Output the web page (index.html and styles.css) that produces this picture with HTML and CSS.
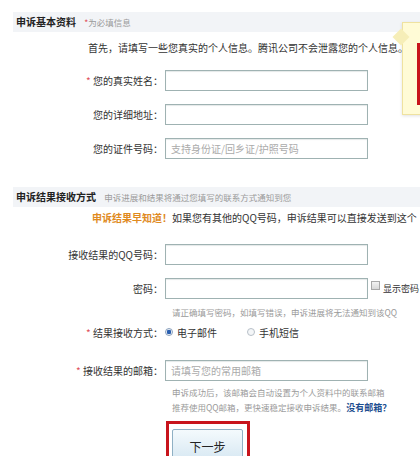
FILE: index.html
```html
<!DOCTYPE html>
<html lang="zh-CN">
<head>
    <meta charset="UTF-8">
    <title>申诉</title>
    <link rel="stylesheet" href="styles.css">
</head>
<body>
    <div class="page">

        <!-- 基本资料 -->
        <div class="bar">申诉基本资料 <span class="bar-note"><em>*</em>为必填信息</span></div>
        <p class="intro">首先，请填写一些您真实的个人信息。腾讯公司不会泄露您的个人信息。</p>

        <div class="row first">
            <label class="label"><em>*</em> 您的真实姓名：</label>
            <input class="field" type="text">
        </div>
        <div class="row">
            <label class="label">您的详细地址：</label>
            <input class="field" type="text">
        </div>
        <div class="row">
            <label class="label">您的证件号码：</label>
            <input class="field" type="text" placeholder="支持身份证/回乡证/护照号码">
        </div>

        <!-- 接收方式 -->
        <div class="bar second">申诉结果接收方式 <span class="bar-note">申诉进展和结果将通过您填写的联系方式通知到您</span></div>
        <p class="tip"><strong>申诉结果早知道！</strong>如果您有其他的QQ号码，申诉结果可以直接发送到这个</p>

        <div class="row qq">
            <label class="label">接收结果的QQ号码：</label>
            <input class="field" type="text">
        </div>
        <div class="row">
            <label class="label">密码：</label>
            <input class="field" type="password">
            <span class="check"><i class="box"></i>显示密码</span>
        </div>
        <p class="hint">请正确填写密码，如填写错误，申诉进展将无法通知到该QQ</p>

        <div class="row radios">
            <label class="label"><em>*</em> 结果接收方式：</label>
            <span class="radio on"><i></i>电子邮件</span>
            <span class="radio"><i></i>手机短信</span>
        </div>

        <div class="row mail">
            <label class="label"><em>*</em> 接收结果的邮箱：</label>
            <input class="field" type="text" placeholder="请填写您的常用邮箱">
        </div>
        <p class="hint two">申诉成功后，该邮箱会自动设置为个人资料中的联系邮箱<br>推荐使用QQ邮箱，更快速稳定接收申诉结果。<a href="#">没有邮箱？</a></p>

        <div class="actions">
            <span class="mark"><button class="next">下一步</button></span>
        </div>

        <!-- 提示框 -->
        <div class="pop"><span class="pop-box"></span></div>
    </div>
</body>
</html>
```

FILE: styles.css
```css
* {
    margin: 0;
    padding: 0;
    box-sizing: border-box;
}

body {
    width: 420px;
    height: 456px;
    overflow: hidden;
    background: #fff;
    font-family: "Noto Sans CJK SC", "DejaVu Sans", sans-serif;
    font-size: 10px;
    color: #333;
}

.page {
    position: relative;
    padding-left: 13px;
    padding-top: 12px;
}

em {
    font-style: normal;
    color: #e0505a;
}

/* 标题条 */
.bar {
    height: 20px;
    line-height: 20px;
    padding-left: 3px;
    background: #f2f4f7;
    font-weight: bold;
    font-size: 10px;
    color: #222;
    white-space: nowrap;
}

.bar-note {
    margin-left: 6px;
    font-weight: normal;
    font-size: 8.5px;
    color: #9a9a9a;
}

.bar.second {
    margin-top: 28px;
}

.intro {
    margin-top: 8px;
    padding-left: 75px;
    line-height: 16px;
    white-space: nowrap;
}

.tip {
    margin-top: 3px;
    padding-left: 79px;
    line-height: 16px;
    white-space: nowrap;
}

.tip strong {
    color: #e08a1e;
}

/* 表单行 */
.row {
    display: flex;
    align-items: center;
    height: 21px;
    margin-top: 13px;
}

.row.first {
    margin-top: 14px;
}

.row.qq {
    margin-top: 18px;
}

.label {
    width: 152px;
    padding-right: 2px;
    text-align: right;
    white-space: nowrap;
}

.field {
    width: 203px;
    height: 21px;
    padding-left: 5px;
    border: 1px solid #9fb2b2;
    box-shadow: inset 0 1px 1px #e4e8e8;
    font-family: inherit;
    font-size: 10px;
    color: #333;
    outline: none;
}

.field::placeholder {
    color: #aaa;
}

.check {
    display: flex;
    align-items: center;
    margin-left: 3px;
    font-size: 9px;
    white-space: nowrap;
}

.box {
    width: 9px;
    height: 9px;
    margin-right: 3px;
    margin-top: -6px;
    border: 1px solid #a8a8a8;
    background: linear-gradient(#f2f2f2, #d8d8d8);
}

.hint {
    margin-top: 6px;
    padding-left: 159px;
    line-height: 14px;
    font-size: 8.5px;
    color: #9a9a9a;
    white-space: nowrap;
}

.hint.two {
    margin-top: 4px;
    line-height: 15px;
}

.hint a {
    font-weight: bold;
    color: #1d4e8f;
    text-decoration: none;
    font-size: 9px;
}

.row.radios {
    height: 16px;
    margin-top: 5px;
}

.radio {
    display: flex;
    align-items: center;
    margin-right: 30px;
    white-space: nowrap;
}

.radio i {
    width: 8px;
    height: 8px;
    margin-right: 4px;
    border: 1px solid #b8c0c8;
    border-radius: 50%;
    background: #f4f6f8;
}

.radio.on i {
    background: radial-gradient(circle, #2a5fb0 0 2px, #e8eef6 2.5px);
    border-color: #8aa0bc;
}

.row.mail {
    margin-top: 20px;
}

/* 按钮 */
.actions {
    margin-top: 6px;
    padding-left: 153px;
}

.mark {
    display: inline-block;
    width: 84px;
    height: 44px;
    padding: 5px 0 0 3px;
    border: 3px solid #c8141c;
}

.next {
    width: 71px;
    height: 30px;
    padding-top: 4px;
    border: 1px solid #8fb0c4;
    border-radius: 2px;
    background: linear-gradient(#f4fafd, #d9e9f3);
    font-family: inherit;
    font-size: 12px;
    color: #222;
}

/* 右侧提示 */
.pop {
    position: absolute;
    left: 402px;
    top: 22px;
    width: 40px;
    height: 93px;
    background: #fffbd6;
    border: 1px solid #efe2a0;
    box-shadow: 0 1px 3px rgba(0, 0, 0, 0.12);
}

.pop::before {
    content: "";
    position: absolute;
    left: -8px;
    top: 8px;
    width: 12px;
    height: 12px;
    background: #f6eeb8;
    transform: rotate(45deg);
}

.pop-box {
    position: absolute;
    left: 14px;
    top: 20px;
    width: 30px;
    height: 62px;
    border: 3px solid #c8141c;
}
```
